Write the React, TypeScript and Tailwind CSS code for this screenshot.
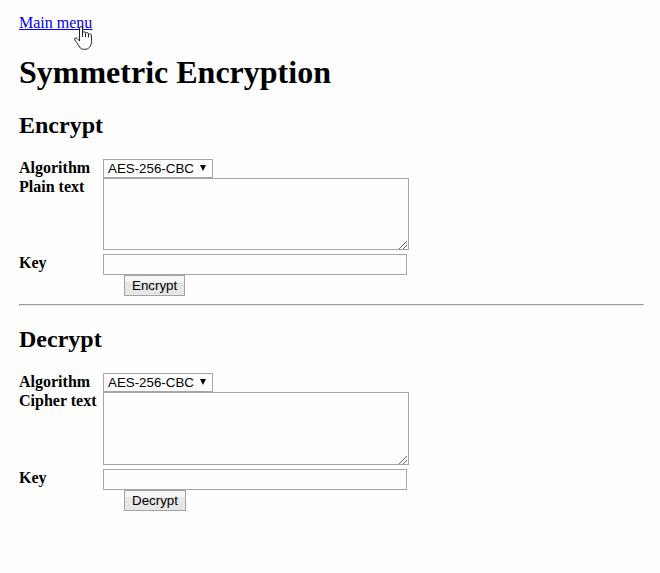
interface CipherFormProps {
  title: string;
  textLabel: string;
  areaClass: string;
}

const labelClass = "w-[84px] shrink-0 text-[16px] leading-[18px] font-bold whitespace-nowrap";

function CipherForm({ title, textLabel, areaClass }: CipherFormProps) {
  return (
    <section>
      <h2 className="h-[47px] text-[24px] leading-[27px] font-bold">{title}</h2>
      <div className="flex h-[19px]">
        <div className={labelClass}>Algorithm</div>
        <div className="flex h-[19px] w-[110px] items-center justify-between border border-[#a6a6a6] pr-[5px] pl-1 font-['Liberation_Sans',Arial,sans-serif] text-[13.333px] leading-[17px]">
          <span className="whitespace-nowrap">AES-256-CBC</span>
          <svg width="8" height="7" viewBox="0 0 8 7">
            <path d="M1 0H7L4 6Z" fill="#000" />
          </svg>
        </div>
      </div>
      <div className="flex">
        <div className={labelClass}>{textLabel}</div>
        <div className={areaClass}>
          <svg width="9" height="9" viewBox="0 0 9 9" shapeRendering="crispEdges">
            <path
              d="M0 8h1v1H0zM1 7h1v1H1zM2 6h1v1H2zM3 5h1v1H3zM4 4h1v1H4zM5 3h1v1H5zM6 2h1v1H6zM7 1h1v1H7zM4 8h1v1H4zM5 7h1v1H5zM6 6h1v1H6zM7 5h1v1H7z"
              fill="#666"
            />
          </svg>
        </div>
      </div>
      <div className="mt-1 flex h-[21px]">
        <div className={labelClass}>Key</div>
        <input aria-label="Key" className="h-[21px] w-[304px] border border-[#a6a6a6] bg-transparent px-1 outline-none" />
      </div>
      <button className="ml-[105px] block h-[21px] border border-[#a3a3a3] bg-linear-to-b from-[#f7f7f7] from-30% to-[#e6e6e6] to-35% px-[7px] font-['Liberation_Sans',Arial,sans-serif] text-[13.333px] leading-[19px]">
        {title}
      </button>
    </section>
  );
}

function HandCursor() {
  return (
    <svg className="absolute top-[26px] left-[74px]" width="19" height="24" viewBox="0 0 19 24">
      <path
        d="M5.5 15V2C5.5.2 8.5.2 8.5 2V6.8C9.2 5.2 11.5 5.4 11.5 7.2C12.5 5.9 14.5 6.5 14.5 8.2C15.8 7.3 17.5 8.2 17.5 10V15.5C17.5 18 16.8 19.5 15.6 21.2C13.5 23.8 8.5 24 6.3 22C5 20.5 4 18 2.7 16.5L.8 14C-.1 12.2 1.7 11.2 3 12.4L5.5 15M8.5 6.8V11M11.5 7.2V11M14.5 8.2V11.5"
        fill="#fefefe"
        stroke="#222233"
        strokeWidth="1"
      />
    </svg>
  );
}

export default function App() {
  return (
    <main className="relative h-[573px] w-[660px] overflow-hidden bg-[#fefefe] pt-[14px] pr-4 pl-[19px] font-['Liberation_Serif','Times_New_Roman',serif] text-black">
      <nav className="h-[40px] text-[16px] leading-[18px]">
        <a href="#" className="text-[#0000ee] underline [text-decoration-skip-ink:none]">Main menu</a>
      </nav>
      <h1 className="h-[58px] text-[32px] leading-[36px] font-bold">Symmetric Encryption</h1>
      <CipherForm
        title="Encrypt"
        textLabel="Plain text"
        areaClass="flex h-[72px] w-[306px] items-end justify-end border border-[#a6a6a6]"
      />
      <hr className="mt-2 mb-5 h-[2px] w-[625px] border border-t-[#999] border-r-[#eee] border-b-[#eee] border-l-[#999]" />
      <CipherForm
        title="Decrypt"
        textLabel="Cipher text"
        areaClass="flex h-[73px] w-[306px] items-end justify-end border border-[#a6a6a6]"
      />
      <HandCursor />
    </main>
  );
}
